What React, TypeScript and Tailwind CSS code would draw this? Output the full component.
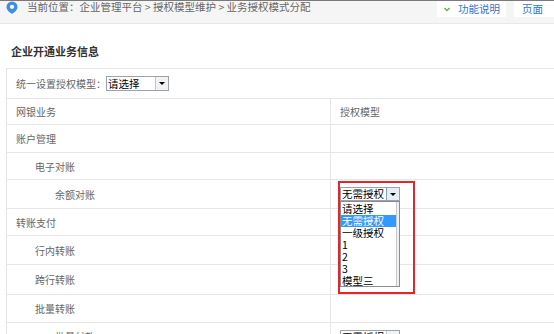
const font = "font-['Noto_Sans_CJK_SC','Noto_Sans',sans-serif]";

type Row = {
  label: string;
  h: string;
  pl: string;
  right?: string;
  select?: string;
  open?: boolean;
};

const rows: Row[] = [
  { label: "网银业务", h: "h-[26px]", pl: "pl-[9px]", right: "授权模型" },
  { label: "账户管理", h: "h-[28px]", pl: "pl-[9px]" },
  { label: "电子对账", h: "h-[27px]", pl: "pl-[28px]" },
  { label: "余额对账", h: "h-[29px]", pl: "pl-[48px]", select: "无需授权", open: true },
  { label: "转账支付", h: "h-[27px]", pl: "pl-[9px]" },
  { label: "行内转账", h: "h-[29px]", pl: "pl-[28px]" },
  { label: "跨行转账", h: "h-[30px]", pl: "pl-[28px]" },
  { label: "批量转账", h: "h-[28px]", pl: "pl-[28px]" },
  { label: "批量付款", h: "h-[28px]", pl: "pl-[48px]", select: "无需授权" },
];

const options = ["请选择", "无需授权", "一级授权", "1", "2", "3", "模型三"];

const Pin = () => (
  <svg width="12" height="13" viewBox="0 0 12 13">
    <path d="M6 0.5a5.5 5.5 0 0 0-5.5 5.5c0 3.2 3.3 5.6 5.5 6.9 2.2-1.3 5.5-3.7 5.5-6.9A5.5 5.5 0 0 0 6 0.5z" fill="#3d8fe6" />
    <circle cx="6" cy="5.8" r="2.1" fill="#fff" />
  </svg>
);

const Arrow = ({ blue }: { blue?: boolean }) => (
  <div
    className={`flex items-center justify-center w-[13px] h-full border-l ${
      blue ? "border-[#7aa2d8] bg-[#e8eef8]" : "border-[#c0c6cf] bg-[#f2f2f2]"
    }`}
  >
    <div className="w-0 h-0 border-l-[3px] border-r-[3px] border-t-[3px] border-l-transparent border-r-transparent border-t-black" />
  </div>
);

const Select = ({ text, w, h, blue }: { text: string; w: string; h: string; blue?: boolean }) => (
  <div className={`flex items-stretch bg-white border border-[#9aa3ad] ${w} ${h}`}>
    <span className="flex-1 flex items-center pl-[1px] text-[10.5px] leading-[12px] text-black whitespace-nowrap">
      {text}
    </span>
    <Arrow blue={blue} />
  </div>
);

const Dropdown = () => (
  <div className="absolute left-[9px] top-[21px] w-[60px] h-[86px] bg-white border border-[#8c8c8c] z-10 flex overflow-hidden">
    <div className="flex-1 flex flex-col pt-[1px]">
      {options.map((o, i) => (
        <div
          key={o}
          className={`h-[12px] flex items-center text-[10.5px] leading-[11px] pl-[1px] whitespace-nowrap ${
            i === 1 ? "bg-[#3399ff] text-white" : "text-black"
          }`}
        >
          {o}
        </div>
      ))}
    </div>
    <div className="w-[3px] border-l border-[#c8c8c8] bg-[#f0f0f0]" />
  </div>
);

export default function App() {
  return (
    <div className={`w-[554px] h-[334px] overflow-hidden bg-white relative ${font}`}>
      <div className="h-[24px] bg-[#f5f5f5] border-t border-[#7a7a7a] border-b border-b-[#e8e8e8] flex items-start">
        <div className="flex items-center gap-[9px] pl-[6px] h-[12px] text-[10.5px] text-[#666] whitespace-nowrap">
          <Pin />
          <span>当前位置：企业管理平台 &gt; 授权模型维护 &gt; 业务授权模式分配</span>
        </div>
        <div className="ml-auto flex gap-[8px]">
          <div className="w-[69px] h-[16px] bg-white flex items-center pl-[7px] gap-[8px]">
            <svg width="6" height="5" viewBox="0 0 6 5">
              <path d="M0.5 1l2.5 2.5 2.5-2.5" stroke="#5cb82e" strokeWidth="1.4" fill="none" />
            </svg>
            <span className="text-[10.5px] text-[#2b78d0] leading-none">功能说明</span>
          </div>
          <div className="w-[40px] h-[16px] bg-white flex items-center pl-[8px]">
            <span className="text-[10.5px] text-[#2b78d0] leading-none whitespace-nowrap">页面</span>
          </div>
        </div>
      </div>

      <div className="mt-[21px] pl-[11px] h-[12px] leading-[12px] text-[11px] font-bold text-[#333]">
        企业开通业务信息
      </div>

      <div className="mt-[11px] ml-[6px] w-[620px] border-l border-t border-[#e6e6e6] text-[10px] text-[#666]">
        <div className="h-[30px] border-b border-[#e6e6e6] flex items-center pl-[9px]">
          <span>统一设置授权模型：</span>
          <Select text="请选择" w="w-[63px]" h="h-[15px]" />
        </div>
        {rows.map((r) => (
          <div key={r.label} className={`flex border-b border-[#e6e6e6] ${r.h}`}>
            <div className={`w-[323px] flex items-center ${r.pl}`}>{r.label}</div>
            <div className="flex-1 border-l border-[#e6e6e6] flex items-center pl-[9px] relative">
              {r.right && <span>{r.right}</span>}
              {r.select && (
                <Select text={r.select} w="w-[60px]" h="h-[14px]" blue={r.open} />
              )}
              {r.open && (
                <>
                  <Dropdown />
                  <div className="absolute left-[7px] top-[1px] w-[77px] h-[113px] border-2 border-[#e8232a] z-20" />
                </>
              )}
            </div>
          </div>
        ))}
      </div>
    </div>
  );
}
